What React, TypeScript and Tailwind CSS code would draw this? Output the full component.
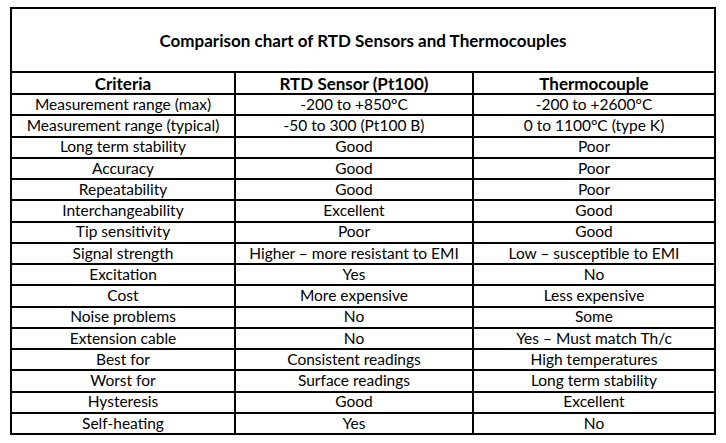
const rows: [string, string, string][] = [
  ["Measurement range (max)", "-200 to +850°C", "-200 to +2600°C"],
  ["Measurement range (typical)", "-50 to 300 (Pt100 B)", "0 to 1100°C (type K)"],
  ["Long term stability", "Good", "Poor"],
  ["Accuracy", "Good", "Poor"],
  ["Repeatability", "Good", "Poor"],
  ["Interchangeability", "Excellent", "Good"],
  ["Tip sensitivity", "Poor", "Good"],
  ["Signal strength", "Higher – more resistant to EMI", "Low – susceptible to EMI"],
  ["Excitation", "Yes", "No"],
  ["Cost", "More expensive", "Less expensive"],
  ["Noise problems", "No", "Some"],
  ["Extension cable", "No", "Yes – Must match Th/c"],
  ["Best for", "Consistent readings", "High temperatures"],
  ["Worst for", "Surface readings", "Long term stability"],
  ["Hysteresis", "Good", "Excellent"],
  ["Self-heating", "Yes", "No"],
];

function Row({ cells, bold, last }: { cells: [string, string, string]; bold?: boolean; last?: boolean }) {
  return (
    <div
      className={`grid grid-cols-[222px_2px_236px_2px_240px] ${bold ? "h-[22px] font-bold text-[17px]" : last ? "h-[19.25px]" : "h-[21.25px]"} ${last ? "" : "border-b-2 border-black"}`}
    >
      <div className="flex items-center justify-center whitespace-nowrap">{cells[0]}</div>
      <div className="bg-black" />
      <div className="flex items-center justify-center whitespace-nowrap">{cells[1]}</div>
      <div className="bg-black" />
      <div className="flex items-center justify-center whitespace-nowrap">{cells[2]}</div>
    </div>
  );
}

export default function App() {
  return (
    <div className="w-[726px] h-[443px] bg-white pt-[7px] pl-[10px] text-black font-['Lato',sans-serif] text-[15.5px] leading-none">
      <div className="w-[706px] border-2 border-black">
        <div className="h-[64px] flex items-center justify-center border-b-2 border-black font-bold text-[17px]">
          Comparison chart of RTD Sensors and Thermocouples
        </div>
        <Row cells={["Criteria", "RTD Sensor (Pt100)", "Thermocouple"]} bold />
        {rows.map((r, i) => (
          <Row key={r[0]} cells={r} last={i === rows.length - 1} />
        ))}
      </div>
    </div>
  );
}
